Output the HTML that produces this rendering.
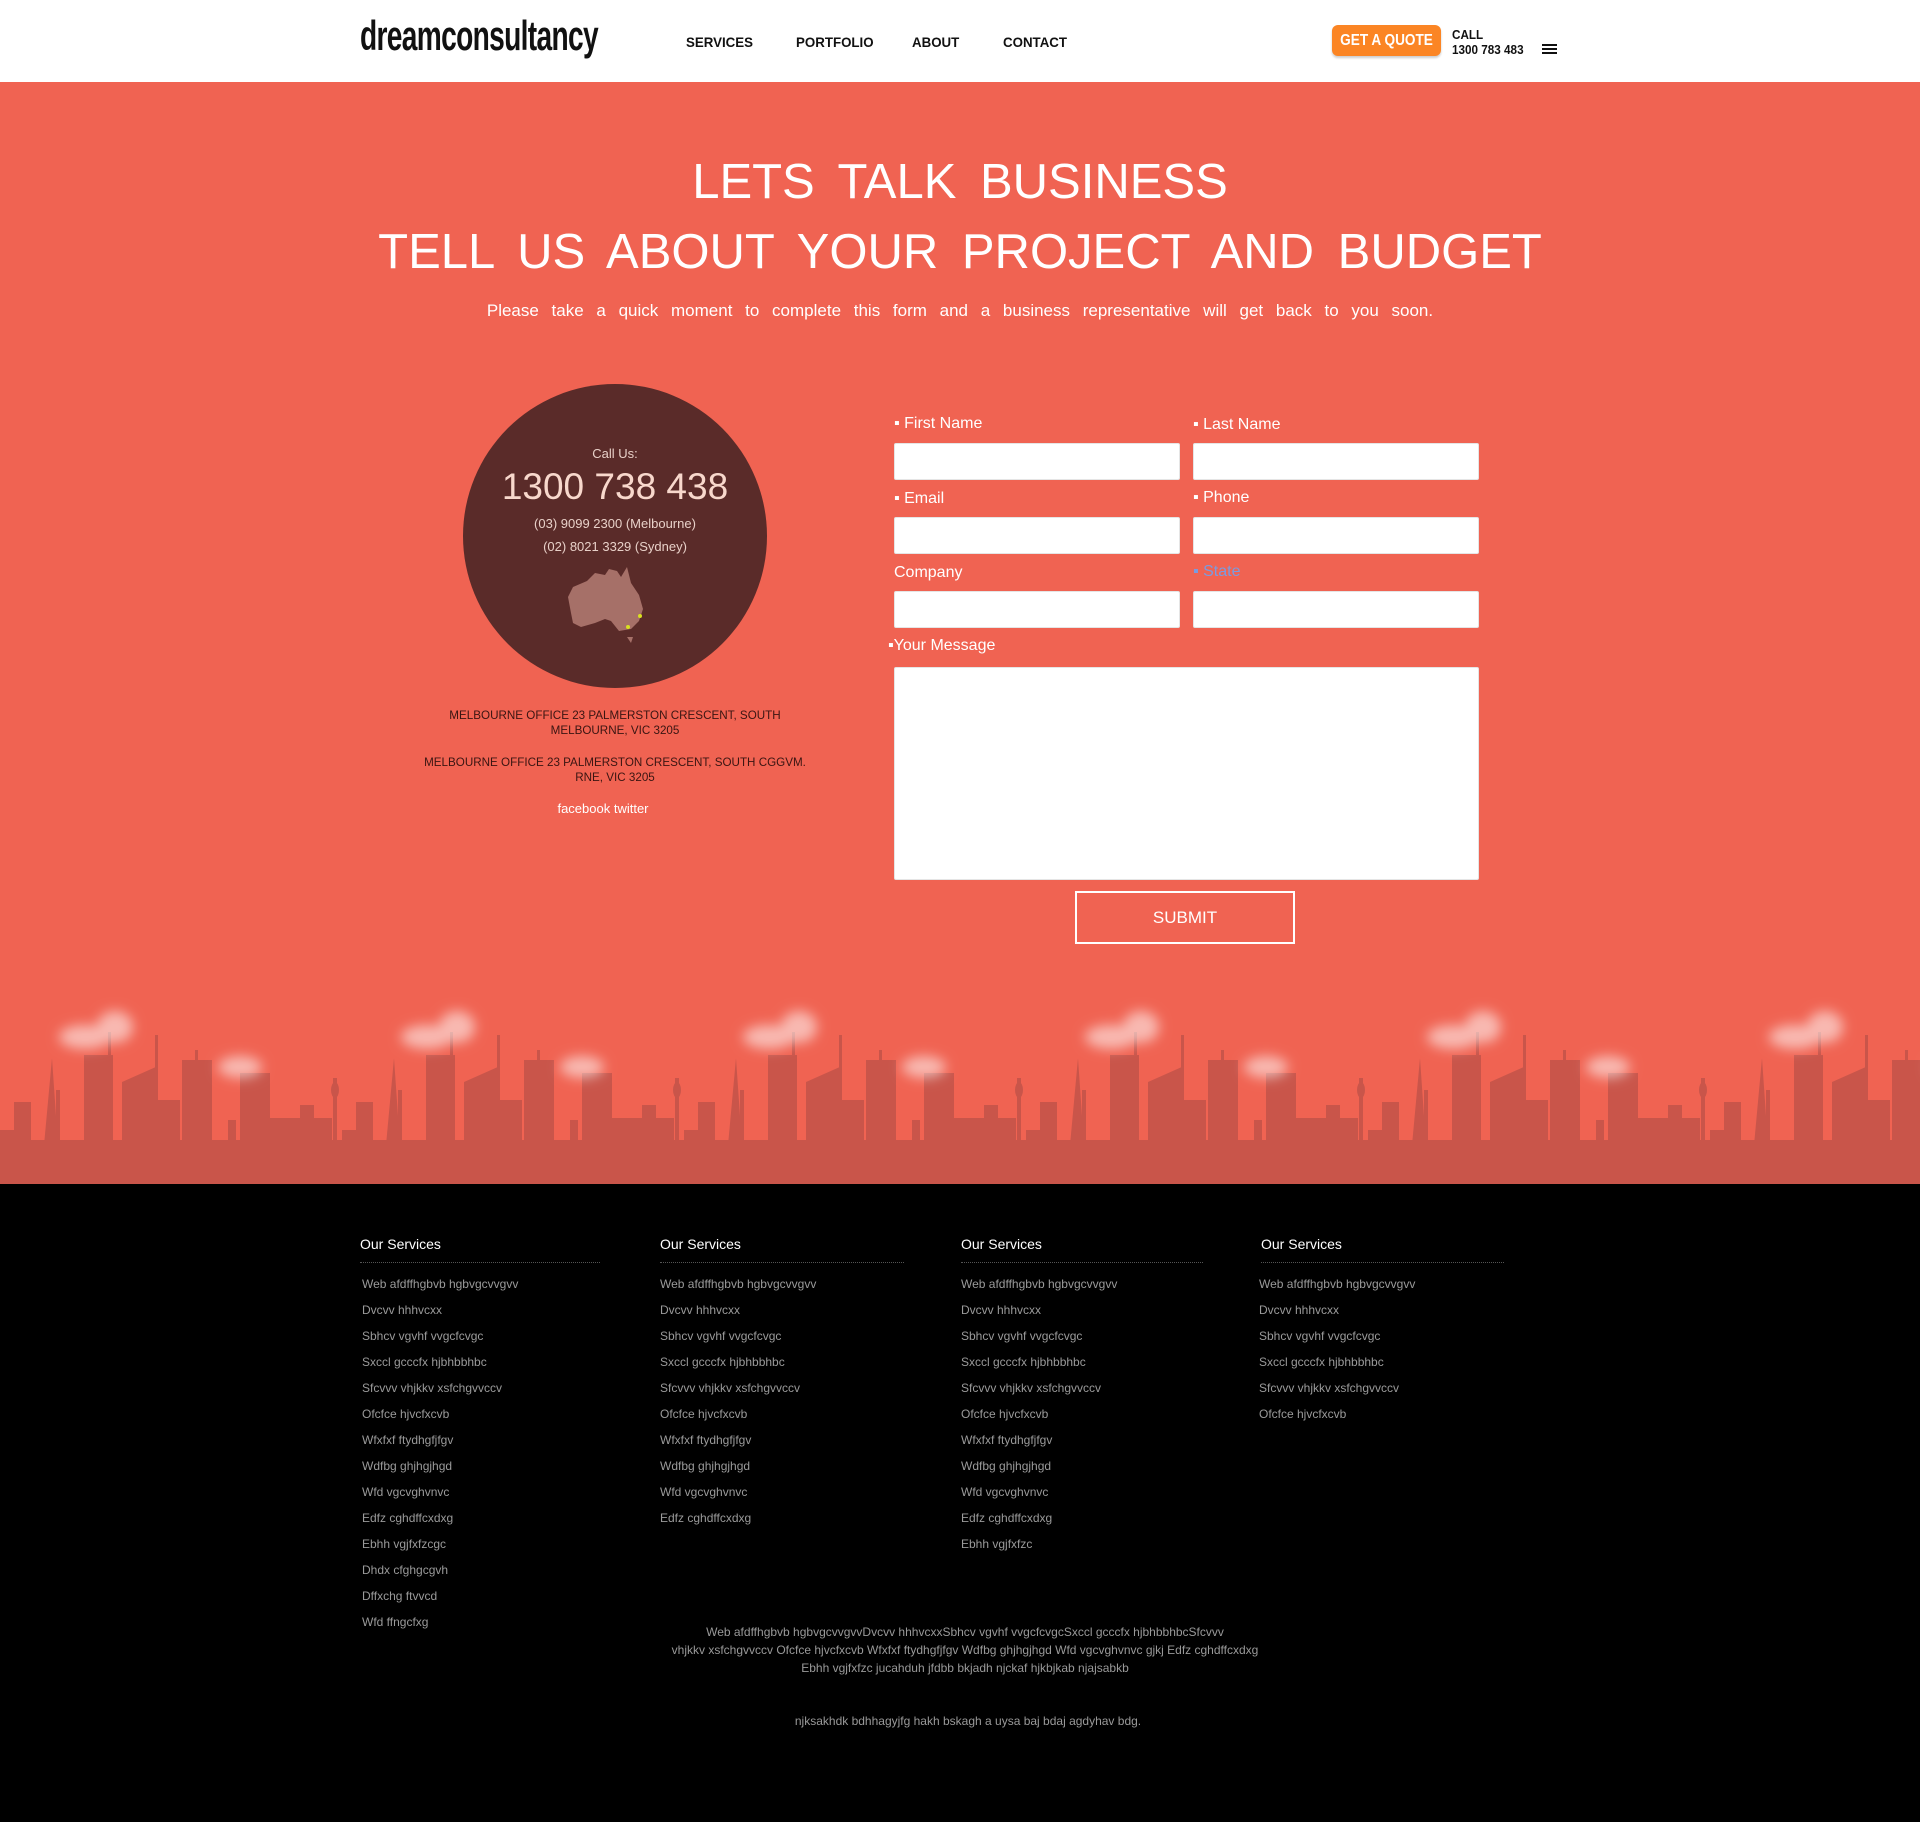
<!DOCTYPE html>
<html><head><meta charset="utf-8"><style>
*{margin:0;padding:0;box-sizing:border-box}
body{width:1920px;height:1822px;background:#000;font-family:"Liberation Sans",sans-serif;position:relative;overflow:hidden}
.a{position:absolute;white-space:nowrap}
header{position:absolute;left:0;top:0;width:1920px;height:82px;background:#fff}
.nav{font-size:14px;font-weight:bold;color:#111;top:34px;transform:scaleX(.95);transform-origin:left}
.hero{position:absolute;left:0;top:82px;width:1920px;height:1102px;background:#f06352}
.h{width:1920px;text-align:center;color:#fff;left:0;font-size:49px;word-spacing:10px}
.lbl{font-size:16px;color:#fff}
.in{position:absolute;background:#fff;border:1px solid #e5e5e5;border-radius:2px}
.fh{font-size:14px;color:#fff}
.fl{position:absolute;height:1px;border-top:1px dotted #555}
.fi{font-size:12px;color:#9a9a9a;line-height:26px;position:absolute}
</style></head><body>
<header>
<div class="a" style="left:360px;top:12px;font-size:42px;font-weight:bold;color:#111;letter-spacing:-1px;transform:scaleX(.67);transform-origin:left">dreamconsultancy</div>
<div class="a nav" style="left:686px">SERVICES</div>
<div class="a nav" style="left:796px">PORTFOLIO</div>
<div class="a nav" style="left:912px">ABOUT</div>
<div class="a nav" style="left:1003px">CONTACT</div>
<div class="a" style="left:1332px;top:25px;width:109px;height:31px;background:#fb8524;border-radius:6px;box-shadow:0 2px 2px rgba(0,0,0,.2);color:#fff;font-weight:bold;font-size:16px;text-align:center;line-height:31px"><span style="display:inline-block;transform:scaleX(.85)">GET A QUOTE</span></div>
<div class="a" style="left:1452px;top:27px;font-size:13px;font-weight:bold;line-height:15px;color:#111;transform:scaleX(.9);transform-origin:left">CALL<br>1300 783 483</div>
<div class="a" style="left:1542px;top:44px;width:15px;height:10px;border-top:2px solid #111;border-bottom:2px solid #111"><div style="margin-top:2px;height:2px;background:#111"></div></div>
</header>
<div class="hero">
<div class="a h" style="top:72px">LETS TALK BUSINESS</div>
<div class="a h" style="top:142px">TELL US ABOUT YOUR PROJECT AND BUDGET</div>
<div class="a" style="left:0;width:1920px;text-align:center;top:219px;font-size:17px;color:#fff;word-spacing:8px">Please take a quick moment to complete this form and a business representative will get back to you soon.</div>

<div class="a" style="left:463px;top:302px;width:304px;height:304px;border-radius:50%;background:#5a2b29"></div>
<div class="a" style="left:463px;width:304px;text-align:center;top:364px;font-size:13px;color:#e8d0c8">Call Us:</div>
<div class="a" style="left:463px;width:304px;text-align:center;top:384px;font-size:37px;color:#f8d8cc">1300 738 438</div>
<div class="a" style="left:463px;width:304px;text-align:center;top:434px;font-size:13px;color:#e8d0c8">(03) 9099 2300 (Melbourne)</div>
<div class="a" style="left:463px;width:304px;text-align:center;top:457px;font-size:13px;color:#e8d0c8">(02) 8021 3329 (Sydney)</div>
<svg class="a" style="left:565px;top:483px" width="100" height="90" viewBox="0 0 100 90">
<path d="M3 32 L8 22 L22 16 L30 8 L40 10 L44 4 L52 6 L56 12 L62 2 L66 18 L74 30 L78 44 L74 56 L66 64 L54 66 L46 56 L40 54 L30 58 L16 62 L8 58 L6 48 Z M62 72 L68 72 L66 78 Z" fill="#a67068"/>
<circle cx="87" cy="51" r="2" fill="#d8e020" transform="translate(-12,0)"/><circle cx="63" cy="62" r="2" fill="#d8e020"/>
</svg>
<div class="a" style="left:415px;width:400px;text-align:center;top:626px;font-size:12px;line-height:15px;color:#3a1512;transform:scaleX(.97)">MELBOURNE OFFICE 23 PALMERSTON CRESCENT, SOUTH<br>MELBOURNE, VIC 3205</div>
<div class="a" style="left:395px;width:440px;text-align:center;top:673px;font-size:12px;line-height:15px;color:#3a1512;transform:scaleX(.97)">MELBOURNE OFFICE 23 PALMERSTON CRESCENT, SOUTH CGGVM.<br>RNE, VIC 3205</div>
<div class="a" style="left:403px;width:400px;text-align:center;top:719px;font-size:13px;color:#fff">facebook twitter</div>

<div class="a lbl" style="left:894px;top:333px">▪ First Name</div>
<div class="a lbl" style="left:1193px;top:334px">▪ Last Name</div>
<div class="in" style="left:894px;top:361px;width:286px;height:37px"></div>
<div class="in" style="left:1193px;top:361px;width:286px;height:37px"></div>
<div class="a lbl" style="left:894px;top:408px">▪ Email</div>
<div class="a lbl" style="left:1193px;top:407px">▪ Phone</div>
<div class="in" style="left:894px;top:435px;width:286px;height:37px"></div>
<div class="in" style="left:1193px;top:435px;width:286px;height:37px"></div>
<div class="a lbl" style="left:894px;top:482px">Company</div>
<div class="a lbl" style="left:1193px;top:481px;color:#7a9be0">▪ State</div>
<div class="in" style="left:894px;top:509px;width:286px;height:37px"></div>
<div class="in" style="left:1193px;top:509px;width:286px;height:37px"></div>
<div class="a lbl" style="left:888px;top:555px">▪Your Message</div>
<div class="in" style="left:894px;top:585px;width:585px;height:213px"></div>
<div class="a" style="left:1075px;top:809px;width:220px;height:53px;border:2px solid #fff;color:#fff;font-size:17px;text-align:center;line-height:49px">SUBMIT</div>

<svg class="a" style="left:0;top:898px" width="1920" height="204">
<defs>
<filter id="bl" x="-50%" y="-50%" width="200%" height="200%"><feGaussianBlur stdDeviation="6"/></filter>
<pattern id="sk" patternUnits="userSpaceOnUse" width="342" height="204">
<g fill="#c9554a">
<rect x="0" y="160" width="342" height="44"/>
<rect x="0" y="150" width="14" height="20"/>
<rect x="14" y="122" width="17" height="45"/>
<polygon points="44,165 52,78 58,165"/>
<rect x="56" y="110" width="4" height="55"/>
<rect x="84" y="75" width="29" height="90"/>
<rect x="108" y="52" width="3" height="30"/>
<polygon points="122,165 122,102 158,86 158,165"/>
<rect x="155" y="55" width="3" height="40"/>
<rect x="158" y="120" width="22" height="45"/>
<rect x="182" y="80" width="30" height="85"/>
<rect x="195" y="70" width="3" height="12"/>
<rect x="228" y="140" width="8" height="25"/>
<rect x="240" y="93" width="30" height="72"/>
<rect x="270" y="138" width="62" height="27"/>
<rect x="300" y="125" width="14" height="20"/>
<rect x="333" y="98" width="4" height="67"/>
<ellipse cx="335" cy="110" rx="4" ry="8"/>
</g>
<g fill="#fff" opacity=".55" filter="url(#bl)">
<ellipse cx="85" cy="57" rx="26" ry="12"/><ellipse cx="115" cy="47" rx="18" ry="16"/>
<ellipse cx="240" cy="87" rx="22" ry="11"/>
</g>
</pattern></defs>
<rect x="0" y="0" width="1920" height="204" fill="url(#sk)"/>
</svg>
</div>

<div class="a fh" style="left:360px;top:1236px">Our Services</div>
<div class="a fh" style="left:660px;top:1236px">Our Services</div>
<div class="a fh" style="left:961px;top:1236px">Our Services</div>
<div class="a fh" style="left:1261px;top:1236px">Our Services</div>
<div class="fl" style="left:360px;top:1262px;width:240px"></div>
<div class="fl" style="left:660px;top:1262px;width:244px"></div>
<div class="fl" style="left:961px;top:1262px;width:242px"></div>
<div class="fl" style="left:1261px;top:1262px;width:243px"></div>
<div class="fi" style="left:362px;top:1271px">Web afdffhgbvb hgbvgcvvgvv<br>Dvcvv hhhvcxx<br>Sbhcv vgvhf vvgcfcvgc<br>Sxccl gcccfx hjbhbbhbc<br>Sfcvvv vhjkkv xsfchgvvccv<br>Ofcfce hjvcfxcvb<br>Wfxfxf ftydhgfjfgv<br>Wdfbg ghjhgjhgd<br>Wfd vgcvghvnvc<br>Edfz cghdffcxdxg<br>Ebhh vgjfxfzcgc<br>Dhdx cfghgcgvh<br>Dffxchg ftvvcd<br>Wfd ffngcfxg</div>
<div class="fi" style="left:660px;top:1271px">Web afdffhgbvb hgbvgcvvgvv<br>Dvcvv hhhvcxx<br>Sbhcv vgvhf vvgcfcvgc<br>Sxccl gcccfx hjbhbbhbc<br>Sfcvvv vhjkkv xsfchgvvccv<br>Ofcfce hjvcfxcvb<br>Wfxfxf ftydhgfjfgv<br>Wdfbg ghjhgjhgd<br>Wfd vgcvghvnvc<br>Edfz cghdffcxdxg</div>
<div class="fi" style="left:961px;top:1271px">Web afdffhgbvb hgbvgcvvgvv<br>Dvcvv hhhvcxx<br>Sbhcv vgvhf vvgcfcvgc<br>Sxccl gcccfx hjbhbbhbc<br>Sfcvvv vhjkkv xsfchgvvccv<br>Ofcfce hjvcfxcvb<br>Wfxfxf ftydhgfjfgv<br>Wdfbg ghjhgjhgd<br>Wfd vgcvghvnvc<br>Edfz cghdffcxdxg<br>Ebhh vgjfxfzc</div>
<div class="fi" style="left:1259px;top:1271px">Web afdffhgbvb hgbvgcvvgvv<br>Dvcvv hhhvcxx<br>Sbhcv vgvhf vvgcfcvgc<br>Sxccl gcccfx hjbhbbhbc<br>Sfcvvv vhjkkv xsfchgvvccv<br>Ofcfce hjvcfxcvb</div>
<div class="a" style="left:0;width:1930px;text-align:center;top:1623px;font-size:12px;line-height:18px;color:#999">Web afdffhgbvb hgbvgcvvgvvDvcvv hhhvcxxSbhcv vgvhf vvgcfcvgcSxccl gcccfx hjbhbbhbcSfcvvv<br>vhjkkv xsfchgvvccv Ofcfce hjvcfxcvb Wfxfxf ftydhgfjfgv Wdfbg ghjhgjhgd Wfd vgcvghvnvc gjkj Edfz cghdffcxdxg<br>Ebhh vgjfxfzc jucahduh jfdbb bkjadh njckaf hjkbjkab njajsabkb</div>
<div class="a" style="left:0;width:1936px;text-align:center;top:1714px;font-size:12px;color:#999">njksakhdk bdhhagyjfg hakh bskagh a uysa baj bdaj agdyhav bdg.</div>
</body></html>
